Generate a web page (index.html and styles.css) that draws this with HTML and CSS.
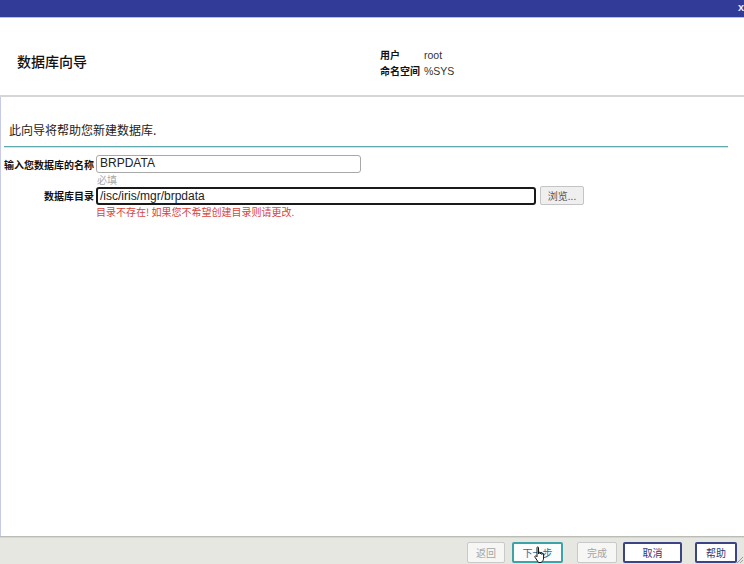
FILE: index.html
```html
<!DOCTYPE html>
<html lang="zh">
<head>
<meta charset="utf-8">
<title>数据库向导</title>
<link rel="stylesheet" href="styles.css">
</head>
<body>
<div class="page">
  <div class="titlebar"><span class="close">x</span></div>
  <div class="header">
    <div class="title">数据库向导</div>
    <div class="info">
      <span class="info-label">用户</span><span class="info-value">root</span>
      <span class="info-label">命名空间</span><span class="info-value">%SYS</span>
    </div>
  </div>
  <div class="main">
    <p class="intro">此向导将帮助您新建数据库.</p>
    <div class="rule"></div>
    <div class="form">
      <label class="label">输入您数据库的名称</label>
      <div class="field"><div class="input input-name">BRPDATA</div></div>
      <span></span>
      <div class="hint">必填</div>
      <label class="label">数据库目录</label>
      <div class="field">
        <div class="input input-dir">/isc/iris/mgr/brpdata</div>
        <button class="browse">浏览...</button>
      </div>
      <span></span>
      <div class="error">目录不存在! 如果您不希望创建目录则请更改.</div>
    </div>
  </div>
  <div class="footer">
    <button class="btn btn-disabled btn-back">返回</button>
    <button class="btn btn-next">下一步</button>
    <button class="btn btn-disabled btn-finish">完成</button>
    <button class="btn btn-cancel">取消</button>
    <button class="btn btn-help">帮助</button>
    <svg class="cursor" width="14" height="18" viewBox="0 0 14 18">
      <path d="M4 1.5c0-.8 1.5-.8 1.5 0V8l.2-1.2c0-.8 1.5-.8 1.5 0V8l.2-1c0-.8 1.5-.8 1.5 0V8.5l.2-.6c0-.8 1.5-.8 1.5 0V12c0 2-1 3.5-2.5 4.5H5.5L2.5 12c-.5-.8-1-1.5-.3-2 .6-.4 1.2 0 1.8.8V1.5z" fill="#fff" stroke="#111" stroke-width="1"/>
    </svg>
    <svg class="grip" width="8" height="8" viewBox="0 0 8 8">
      <path d="M7 1L1 7M7 4L4 7" stroke="#999" stroke-width="1"/>
    </svg>
  </div>
</div>
</body>
</html>
```

FILE: styles.css
```css
html, body {
  margin: 0;
  padding: 0;
}
body {
  font-family: "Liberation Sans", "Noto Sans CJK SC", Arial, sans-serif;
  color: #222;
  background: #fff;
}
.page {
  width: 744px;
  height: 564px;
  display: flex;
  flex-direction: column;
  overflow: hidden;
}
.titlebar {
  height: 17px;
  background: #333b98;
  border-bottom: 1px solid #b9bfdc;
  display: flex;
  justify-content: flex-end;
  overflow: hidden;
  flex: none;
}
.close {
  color: #e8ecff;
  font-weight: bold;
  font-size: 11px;
  line-height: 12px;
  margin-right: 0;
  margin-top: 1px;
}
.header {
  height: 68px;
  padding-top: 9px;
  border-bottom: 2px solid #d6d6d6;
  display: flex;
  align-items: center;
  flex: none;
}
.title {
  width: 363px;
  padding-left: 17px;
  font-family: "Noto Sans CJK SC", sans-serif;
  font-size: 14px;
  font-weight: 500;
  color: #111;
}
.info {
  display: grid;
  grid-template-columns: 44px auto;
  row-gap: 2px;
  font-size: 10px;
  line-height: 14px;
  margin-top: 3px;
}
.info-label {
  font-family: "Noto Sans CJK SC", sans-serif;
  font-weight: bold;
  color: #111;
}
.info-value {
  color: #333;
  font-size: 10.5px;
}
.main {
  flex: 1;
  border-left: 1px solid #c8cae9;
  padding-top: 25px;
}
.intro {
  margin: 0 0 0 8px;
  font-family: "Noto Sans CJK SC", sans-serif;
  font-size: 12px;
  line-height: 16px;
  color: #222;
}
.rule {
  margin: 8px 16px 0 3px;
  height: 1px;
  border-top: 1px solid #5fa9ad;
  background: #cfe5e6;
}
.form {
  display: grid;
  grid-template-columns: 93px 1fr;
  column-gap: 2px;
  margin-top: 7px;
  align-items: center;
}
.label {
  text-align: right;
  font-family: "Noto Sans CJK SC", sans-serif;
  font-weight: bold;
  font-size: 10px;
  color: #111;
}
.field {
  display: flex;
  align-items: center;
}
.input {
  box-sizing: border-box;
  height: 18px;
  line-height: 15px;
  font-size: 12px;
  color: #222;
  padding-left: 3px;
  border-radius: 3px;
  background: #fff;
}
.input-name {
  width: 265px;
  border: 1px solid #a8a8a8;
}
.input-dir {
  width: 440px;
  border: 2px solid #1a1a1a;
  line-height: 14px;
  padding-left: 2px;
}
.browse {
  margin-left: 4px;
  width: 44px;
  height: 19px;
  padding: 0;
  font-family: "Noto Sans CJK SC", sans-serif;
  font-size: 10px;
  color: #555;
  background: #efefef;
  border: 1px solid #c4c4c4;
  border-radius: 2px;
}
.hint {
  font-family: "Noto Sans CJK SC", sans-serif;
  font-size: 10px;
  line-height: 12px;
  color: #a8a8a8;
  padding-left: 1px;
  margin-top: 1px;
}
.error {
  font-family: "Noto Sans CJK SC", sans-serif;
  font-size: 10px;
  line-height: 14px;
  color: #d8443a;
}
.footer {
  position: relative;
  height: 28px;
  flex: none;
  border-top: 1px solid #bcbcb6;
  box-shadow: inset 0 1px 0 #d6d6d0;
  background: #e7e7e1;
  display: flex;
  justify-content: flex-end;
  align-items: flex-start;
  padding-top: 5px;
  padding-right: 7px;
  box-sizing: border-box;
}
.btn {
  height: 21px;
  padding: 0;
  font-family: "Noto Sans CJK SC", sans-serif;
  font-size: 10px;
  background: #fff;
  border-radius: 2px;
}
.btn-disabled {
  background: #f6f6f4;
  border: 1px solid #c9c9c9;
  color: #a5a5a5;
}
.btn-back { width: 38px; }
.btn-next {
  width: 51px;
  margin-left: 7px;
  border: 2px solid #3ea3a8;
  color: #2c6c9a;
  background: #fbfdfd;
}
.btn-finish { width: 40px; margin-left: 14px; }
.btn-cancel {
  width: 59px;
  margin-left: 6px;
  border: 2px solid #3c4488;
  color: #2f3778;
}
.btn-help {
  width: 42px;
  margin-left: 13px;
  border: 2px solid #3c4488;
  color: #2f3778;
}
.cursor {
  position: absolute;
  left: 533px;
  top: 9px;
}
.grip {
  position: absolute;
  right: 0;
  bottom: 0;
}
```
